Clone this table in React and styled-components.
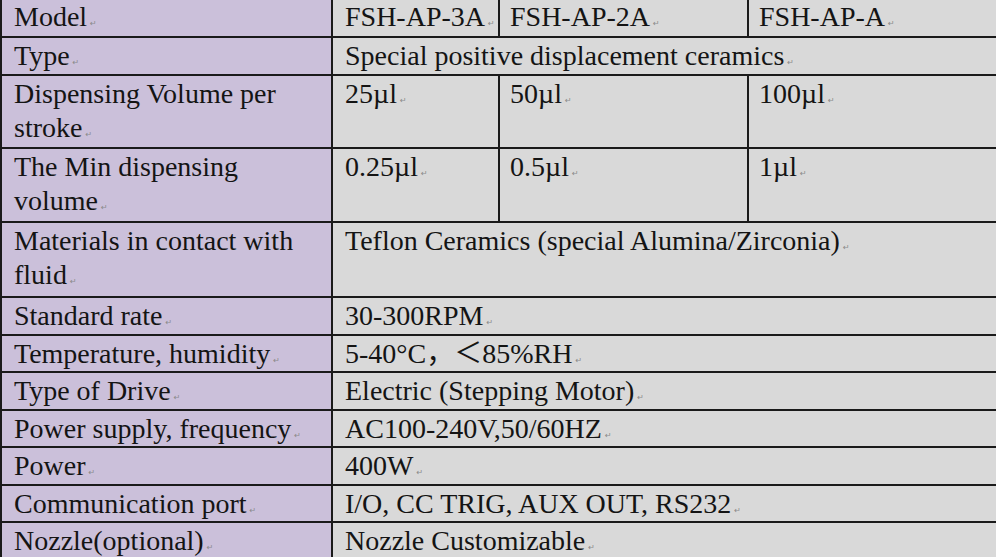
import React from "react";
import styled, { createGlobalStyle } from "styled-components";

const GlobalStyle = createGlobalStyle`
  html, body {
    margin: 0;
    padding: 0;
    background: #d9d9d9;
    overflow: hidden;
  }
  #root {
    width: 996px;
    height: 557px;
    overflow: hidden;
  }
`;

const Table = styled.table`
  width: 996px;
  table-layout: fixed;
  border-collapse: collapse;
  font-family: "Liberation Serif", "Noto Sans CJK SC", serif;
  font-size: 28px;
  line-height: 34px;
  color: #141414;
`;

const Col = styled.col`
  width: ${(p) => p.w}px;
`;

const Row = styled.tr`
  height: ${(p) => p.h}px;
`;

const Cell = styled.td`
  vertical-align: top;
  padding: 1px 10px 0 12px;
  border-top: 2px solid #1a1a1a;
  border-left: 2px solid #1a1a1a;
  white-space: ${(p) => (p.nowrap ? "nowrap" : "normal")};
  overflow: hidden;
  tr:first-child > & {
    border-top: none;
    padding-top: 0;
  }
`;

const LabelCell = styled(Cell)`
  background: #cbc0da;
`;

const ValueCell = styled(Cell)`
  background: #d9d9d9;
  padding-left: ${(p) => (p.first ? 12 : 10)}px;
`;

const Mark = styled.span`
  font-family: "DejaVu Sans", sans-serif;
  font-size: 8px;
  line-height: 0;
  color: #8a8a8a;
  margin-left: 3px;
`;

const rows = [
  { label: "Model", h: 37, values: ["FSH-AP-3A", "FSH-AP-2A", "FSH-AP-A"] },
  { label: "Type", h: 38, values: ["Special positive displacement ceramics"] },
  { label: "Dispensing Volume per stroke", h: 73, values: ["25µl", "50µl", "100µl"] },
  { label: "The Min dispensing volume", h: 74, values: ["0.25µl", "0.5µl", "1µl"] },
  { label: "Materials in contact with fluid", h: 75, values: ["Teflon Ceramics (special Alumina/Zirconia)"] },
  { label: "Standard rate", h: 38, values: ["30-300RPM"] },
  { label: "Temperature, humidity", h: 37, values: ["5-40°C，＜85%RH"] },
  { label: "Type of Drive", h: 38, values: ["Electric (Stepping Motor)"] },
  { label: "Power supply, frequency", h: 37, values: ["AC100-240V,50/60HZ"] },
  { label: "Power", h: 38, values: ["400W"] },
  { label: "Communication port", h: 37, values: ["I/O, CC TRIG, AUX OUT, RS232"] },
  { label: "Nozzle(optional)", h: 38, values: ["Nozzle Customizable"] },
];

function Text({ children }) {
  return (
    <>
      {children}
      <Mark>↵</Mark>
    </>
  );
}

export default function App() {
  return (
    <>
      <GlobalStyle />
      <Table>
        <colgroup>
          <Col w={331} />
          <Col w={167} />
          <Col w={249} />
          <Col w={249} />
        </colgroup>
        <tbody>
          {rows.map((row) => (
            <Row key={row.label} h={row.h}>
              <LabelCell>
                <Text>{row.label}</Text>
              </LabelCell>
              {row.values.length === 1 ? (
                <ValueCell first colSpan={3} nowrap>
                  <Text>{row.values[0]}</Text>
                </ValueCell>
              ) : (
                row.values.map((v, i) => (
                  <ValueCell key={v} first={i === 0} nowrap>
                    <Text>{v}</Text>
                  </ValueCell>
                ))
              )}
            </Row>
          ))}
        </tbody>
      </Table>
    </>
  );
}
